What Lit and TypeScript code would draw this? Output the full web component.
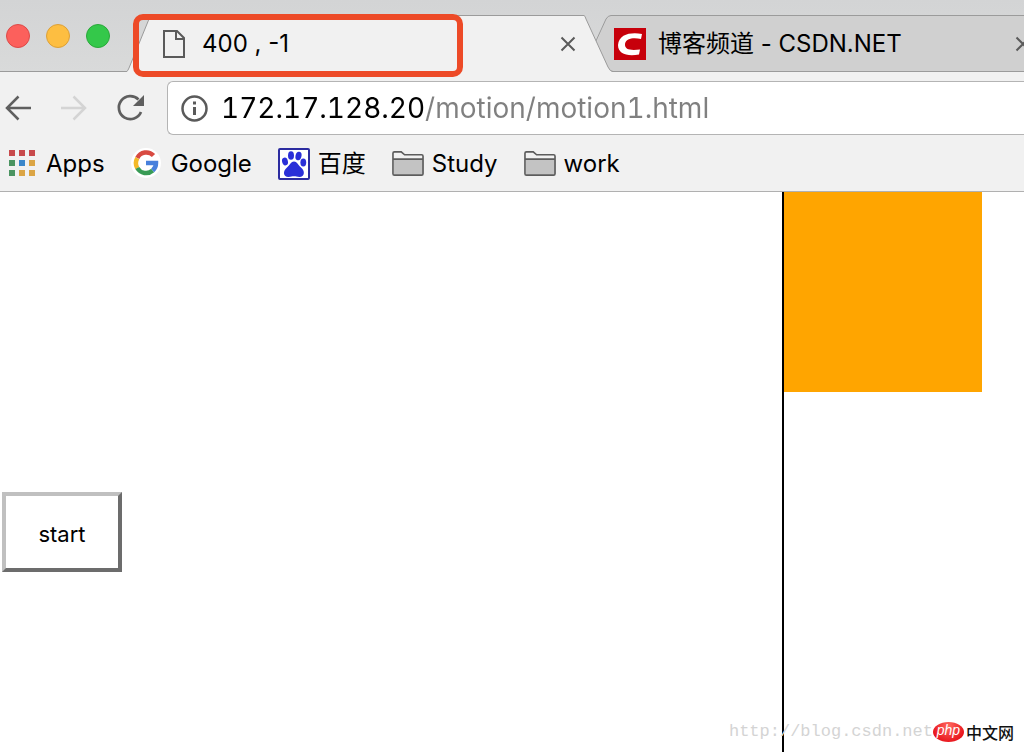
import { LitElement, html, css, svg } from "lit";
import { customElement, state } from "lit/decorators.js";

const folder = () => svg`
  <path d="M2 25V3.500Q2 2 3.500 2H10L13.500 5H30.500Q32 5 32 6.500V24.500Q32 26 30.500 26H3.500Q2 26 2 24.500Z" fill="#f1f1f1"/>
  <path d="M2 9H32V25H2Z" fill="#c3c3c3"/>
  <path d="M1 3Q1 1.500 2.500 1.500H9.500L13 4.500H30.500Q32 4.500 32 6V24Q32 25.500 30.500 25.500H2.500Q1 25.500 1 24ZM1 9H32" fill="none" stroke="#5c5c5c" stroke-width="1.700"/>`;

@customElement("app-root")
export class AppRoot extends LitElement {
  @state() private url = "172.17.128.20/motion/motion1.html";

  static styles = css`
    :host {
      display: flex;
      flex-direction: column;
      position: relative;
      min-height: 100vh;
      overflow: hidden;
      background: #fff;
      color: #000;
      font: 24px/32px Inter, "Noto Sans CJK SC", sans-serif;
    }
    * { box-sizing: border-box; }
    button, input { font: inherit; color: inherit; margin: 0; }
    svg { display: block; flex: none; }
    .plain { border: 0; padding: 0; background: none; display: block; }
    .strip {
      display: flex;
      height: 72px;
      padding-top: 15px;
      background: linear-gradient(#d3d4d5, #d9dada);
      box-shadow: inset 0 -1px #9b9b9b;
    }
    .lights { display: flex; gap: 16px; padding: 9px 0 0 6px; width: 126px; flex: none; }
    .light { width: 24px; height: 24px; border-radius: 50%; border: 1px solid; flex: none; }
    .red { background: #fc605c; border-color: #dc4a48; }
    .yellow { background: #fdbe41; border-color: #dca038; }
    .green { background: #34c84a; border-color: #2aa83a; }
    .tab { display: flex; flex: none; position: relative; height: 57px; }
    .active { z-index: 1; width: 487px; }
    .idle { width: 460px; margin-left: -28px; }
    .body {
      display: flex;
      flex: 1;
      min-width: 0;
      align-items: center;
      border-top: 1px solid #9b9b9b;
      background: #f1f1f1;
    }
    .idle .body { background: #d0d0d0; border-bottom: 1px solid #9b9b9b; }
    .title { flex: 1; white-space: nowrap; }
    .active .title { margin-left: 17px; }
    .idle .title { margin-left: 12px; }
    .active .doc { margin-left: 11px; }
    .mark {
      position: absolute;
      left: 7px;
      top: -1px;
      width: 330px;
      height: 63px;
      border: 6px solid #ed4a27;
      border-radius: 10px;
      pointer-events: none;
    }
    .toolbar {
      display: flex;
      align-items: center;
      height: 72px;
      padding-left: 4px;
      background: #f1f1f1;
    }
    .nav { display: flex; gap: 28px; width: 163px; flex: none; }
    .omnibox {
      display: flex;
      flex: 1;
      align-items: center;
      height: 54px;
      padding-left: 12px;
      border: 1px solid #b4b4b4;
      border-right: 0;
      border-radius: 6px 0 0 6px;
      background: #fff;
    }
    .url {
      flex: 1;
      min-width: 0;
      height: 40px;
      margin-left: 12px;
      padding: 0;
      border: 0;
      outline: 0;
      font-size: 28px;
      font-variant-numeric: tabular-nums;
      color: transparent;
      background: linear-gradient(90deg, #000 203px, #808080 203px);
      -webkit-background-clip: text;
      background-clip: text;
    }
    .bookmarks {
      display: flex;
      align-items: center;
      gap: 26px;
      height: 48px;
      padding: 0 8px 8px;
      border-bottom: 1px solid #b0b0b0;
      background: #f1f1f1;
    }
    .bookmarks a { display: flex; align-items: center; gap: 8px; color: inherit; text-decoration: none; white-space: nowrap; }
    .page { display: flex; flex: 1; }
    .controls { width: 782px; flex: none; padding: 300px 0 0 2px; }
    .start {
      display: block;
      width: 120px;
      height: 80px;
      padding: 4px 0 0;
      border: 4px solid;
      border-color: #c0c0c0 #6c6c6c #6c6c6c #c0c0c0;
      background: #fff;
      font-size: 22px;
    }
    .track { flex: 1; border-left: 2px solid #000; }
    .box { width: 198px; height: 200px; background: #ffa500; }
    .watermark {
      position: absolute;
      right: 10px;
      bottom: 8px;
      display: flex;
      align-items: center;
      height: 24px;
      font: 17px/24px "Liberation Mono", monospace;
      color: #d4d4d4;
    }
    .logo {
      width: 31px;
      height: 20px;
      margin-right: 2px;
      border-radius: 50%;
      background: radial-gradient(ellipse at 50% 20%, #ff6a60, #e8141c 75%);
      color: #fff;
      font: italic 14px/17px "Liberation Sans", sans-serif;
      text-align: center;
    }
    .site { color: #111; font: 500 16px/24px "Noto Sans CJK SC", sans-serif; }
  `;

  render() {
    return html`
      <header>
        <div class="strip">
          <div class="lights">
            <button class="plain light red" aria-label="Close window"></button>
            <button class="plain light yellow" aria-label="Minimize"></button>
            <button class="plain light green" aria-label="Zoom"></button>
          </div>
          <div class="tab active">
            <svg width="26" height="57"><path d="M0 57Q2 56 3 53L23 4Q24 .5 26 .5V57Z" fill="#f1f1f1"/><path d="M0 57Q2 56 3 53L23 4Q24 .5 26 .5" fill="none" stroke="#9b9b9b"/></svg>
            <div class="body">
              <svg class="doc" width="22" height="30" viewBox="0 0 22 30"><path d="M1 2H14L21 9V28H1ZM13 2V10H21" fill="none" stroke="#5a5a5a" stroke-width="2"/></svg>
              <span class="title">400 , -1</span>
              <button class="plain" aria-label="Close tab"><svg width="16" height="16"><path d="M1.500 1.500 14.500 14.500M14.500 1.500 1.500 14.500" stroke="#5a5a5a" stroke-width="2"/></svg></button>
              <svg width="8" height="1"></svg>
            </div>
            <svg width="29" height="57"><path d="M0 .5Q1 .5 2 4L24 52Q26 56.500 29 57H0Z" fill="#f1f1f1"/><path d="M0 .5Q1 .5 2 4L24 52Q26 56.500 29 56.500" fill="none" stroke="#9b9b9b"/></svg>
            <div class="mark"></div>
          </div>
          <div class="tab idle">
            <svg width="26" height="57"><path d="M0 57 3 50L21 4Q23 .5 26 .5V56.500H0Z" fill="#d0d0d0"/><path d="M0 50 21 4Q23 .5 26 .5" fill="none" stroke="#9b9b9b"/><path d="M12 56.500H26" stroke="#9b9b9b"/></svg>
            <div class="body">
              <svg width="35" height="32" viewBox="-3 0 35 32"><path d="M0 0H32V32H0Z" fill="#c7000b"/><path d="M28 6 27 11C20 9.500 12 10 11 16C10.500 22 17 22.500 26 21.500L25 26.500C13 28.500 4 26 4 17C5 6 17 4 28 6Z" fill="#fff"/></svg>
              <span class="title">博客频道 - CSDN.NET</span>
              <button class="plain" aria-label="Close tab"><svg width="16" height="16"><path d="M1.500 1.500 14.500 14.500M14.500 1.500 1.500 14.500" stroke="#5a5a5a" stroke-width="2"/></svg></button>
              <svg width="14" height="1"></svg>
            </div>
          </div>
        </div>
        <div class="toolbar">
          <nav class="nav">
            <button class="plain" aria-label="Back"><svg width="28" height="28"><path d="M27 14H3M14.500 2.500 3 14 14.500 25.500" fill="none" stroke="#5f5f5f" stroke-width="2.500"/></svg></button>
            <button class="plain" aria-label="Forward"><svg width="28" height="28"><path d="M1 14H25M13.500 2.500 25 14 13.500 25.500" fill="none" stroke="#d4d4d4" stroke-width="2.500"/></svg></button>
            <button class="plain" aria-label="Reload"><svg width="29" height="28"><path d="M22.500 5.500A11.500 11.500 0 1 0 25 18" fill="none" stroke="#5f5f5f" stroke-width="2.700"/><path d="M28 1V12H17Z" fill="#5f5f5f"/></svg></button>
          </nav>
          <div class="omnibox">
            <svg width="29" height="29"><circle cx="14.500" cy="14.500" r="12" fill="none" stroke="#5a5a5a" stroke-width="2.500"/><path d="M14.500 7.500V10.500M14.500 13V21" stroke="#5a5a5a" stroke-width="3"/></svg>
            <input class="url" aria-label="Address" spellcheck="false" .value=${this.url} />
          </div>
        </div>
        <nav class="bookmarks">
          <a href="#"><svg width="30" height="28">
            <path d="M1 0h6v6H1zM11 0h6v6h-6zM21 0h6v6h-6z" fill="#c84a4c"/>
            <path d="M1 10h6v6H1zM1 20h6v6H1z" fill="#4b9461"/>
            <path d="M11 10h6v6h-6z" fill="#3b87ca"/>
            <path d="M11 20h6v6h-6zM21 10h6v6h-6zM21 20h6v6h-6z" fill="#dba545"/></svg>Apps</a>
          <a href="#"><svg width="32" height="32"><circle cx="15" cy="15" r="15" fill="#fff"/><g fill="none" stroke-width="4.500" transform="translate(-1 -1)"><path d="M23.500 8.500A10 10 0 0 0 7.300 11" stroke="#d84a41"/><path d="M7.300 11A10 10 0 0 0 7.300 21" stroke="#f3b928"/><path d="M7.300 21A10 10 0 0 0 22.700 23.500" stroke="#389b55"/><path d="M22.700 23.500A10 10 0 0 0 26 16H16" stroke="#4780dc"/></g></svg>Google</a>
          <a href="#"><svg width="32" height="32"><rect x="1" y="1" width="30" height="30" rx="1" fill="#fff" stroke="#2c2ca0" stroke-width="2"/><g fill="#2a2fd8"><ellipse cx="13" cy="7.500" rx="3" ry="4.300"/><ellipse cx="20.500" cy="8" rx="3" ry="4.300" transform="rotate(12 20.500 8)"/><ellipse cx="7" cy="13.500" rx="2.900" ry="3.900" transform="rotate(-15 7 13.500)"/><ellipse cx="25.300" cy="14.500" rx="2.900" ry="3.900"/><path d="M16 13.500C19 13.500 20 17 23 19.500C27.500 23 26.500 29 21.500 29C19 29 18 28.300 16 28.300S13 29 10.500 29C5 29 4.500 23 9 19.500C12 17 13 13.500 16 13.500Z"/></g></svg>百度</a>
          <a href="#"><svg width="32" height="27" viewBox="0 0 33 27">${folder()}</svg>Study</a>
          <a href="#"><svg width="32" height="27" viewBox="0 0 33 27">${folder()}</svg>work</a>
        </nav>
      </header>
      <main class="page">
        <div class="controls"><button class="start">start</button></div>
        <div class="track"><div class="box"></div></div>
      </main>
      <div class="watermark"><span>http://blog.csdn.net</span><span class="logo">php</span><span class="site">中文网</span></div>
    `;
  }
}
